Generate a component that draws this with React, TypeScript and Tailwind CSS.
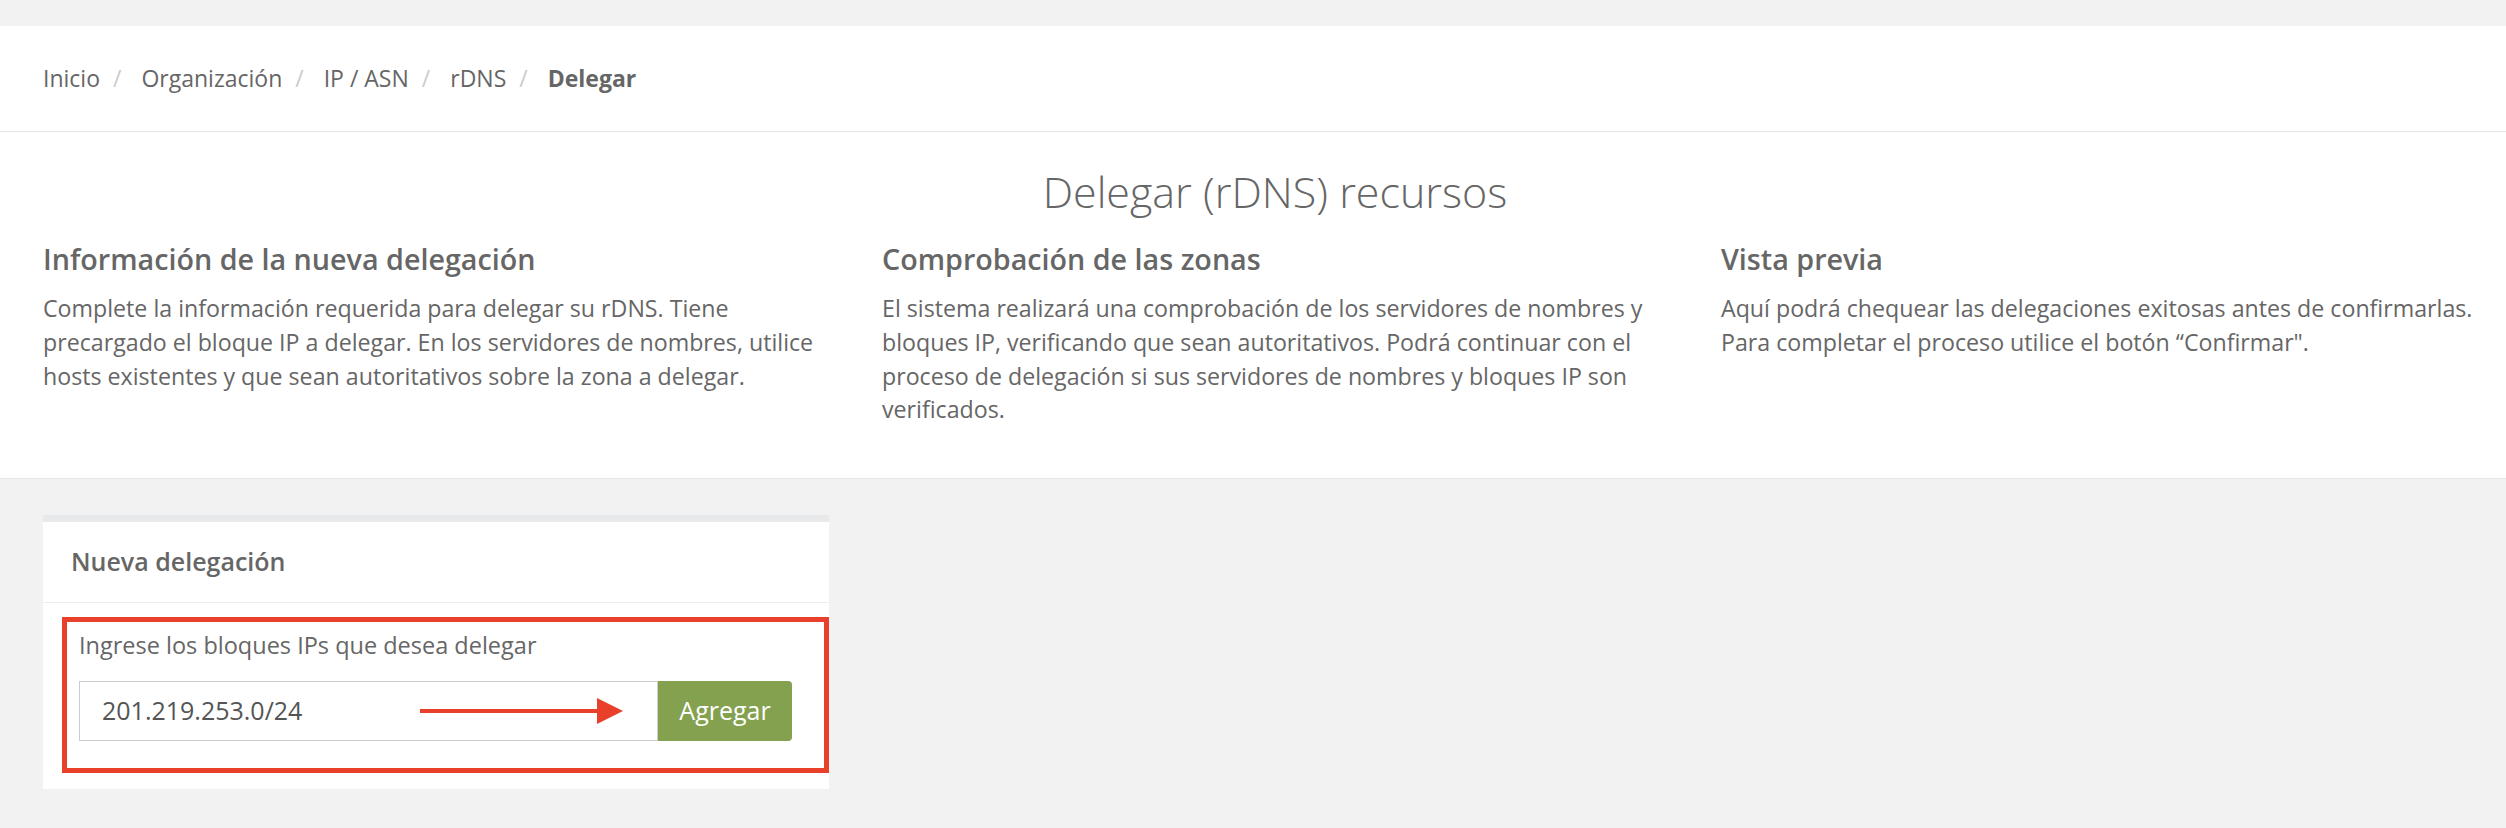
const crumbs = ["Inicio", "Organización", "IP / ASN", "rDNS"];

const columns = [
  {
    title: "Información de la nueva delegación",
    text: "Complete la información requerida para delegar su rDNS. Tiene precargado el bloque IP a delegar. En los servidores de nombres, utilice hosts existentes y que sean autoritativos sobre la zona a delegar.",
  },
  {
    title: "Comprobación de las zonas",
    text: "El sistema realizará una comprobación de los servidores de nombres y bloques IP, verificando que sean autoritativos. Podrá continuar con el proceso de delegación si sus servidores de nombres y bloques IP son verificados.",
  },
  {
    title: "Vista previa",
    text: "Aquí podrá chequear las delegaciones exitosas antes de confirmarlas. Para completar el proceso utilice el botón “Confirmar\".",
  },
];

function Breadcrumb() {
  return (
    <nav className="h-[106px] bg-white border-b border-[#e6e6e6] flex items-center pl-[43px] text-[23px]">
      {crumbs.map((c) => (
        <span key={c} className="flex items-center">
          <span>{c}</span>
          <span className="ml-[13px] mr-[20px] text-[#cccccc]">/</span>
        </span>
      ))}
      <span className="font-bold">Delegar</span>
    </nav>
  );
}

function Intro() {
  return (
    <section className="bg-white border-b border-[#e6e6e6] pt-[36px] pb-[51px]">
      <h1 className="pl-[44px] text-center text-[43px] font-light leading-[48px] text-[#666]">
        Delegar (rDNS) recursos
      </h1>
      <div className="grid grid-cols-[796px_796px_1fr] gap-x-[43px] pl-[43px] mt-[27px]">
        {columns.map((col) => (
          <div key={col.title}>
            <h3 className="text-[28.7px] font-semibold leading-[31px]">{col.title}</h3>
            <p className="mt-[18px] text-[23.2px] leading-[33.75px]">{col.text}</p>
          </div>
        ))}
      </div>
    </section>
  );
}

function DelegationCard() {
  return (
    <div className="ml-[43px] mt-[36px] w-[786px] bg-white border-t-[7px] border-[#e8e9ea]">
      <div className="h-[81px] border-b border-[#ececec] flex items-center pl-[28px]">
        <h4 className="text-[25px] font-semibold">Nueva delegación</h4>
      </div>
      <div className="pt-[14px] pl-[19px] pb-[16px]">
        <div className="border-[5px] border-[#e8402a] pl-[12px] pt-[7px] pb-[27px]">
          <label className="block text-[23.5px] leading-[33.75px]">
            Ingrese los bloques IPs que desea delegar
          </label>
          <div className="mt-[18px] flex h-[60px]">
            <div className="relative w-[579px] h-full border border-[#cccccc] flex items-center pl-[22px] text-[25px] text-[#555]">
              201.219.253.0/24
              <svg
                className="absolute left-[340px] top-[16px]"
                width="203"
                height="26"
                viewBox="0 0 203 26"
              >
                <rect x="0" y="11" width="182" height="4" fill="#e8402a" />
                <polygon points="177,0 203,13 177,26" fill="#e8402a" />
              </svg>
            </div>
            <button className="w-[134px] h-full bg-[#84a14f] text-white text-[25px] rounded-r-[4px]">
              Agregar
            </button>
          </div>
        </div>
      </div>
    </div>
  );
}

export default function App() {
  return (
    <div className="min-h-[828px] bg-[#f2f2f2] text-[#666] font-['Open_Sans',sans-serif]">
      <div className="h-[26px]" />
      <Breadcrumb />
      <Intro />
      <DelegationCard />
    </div>
  );
}
